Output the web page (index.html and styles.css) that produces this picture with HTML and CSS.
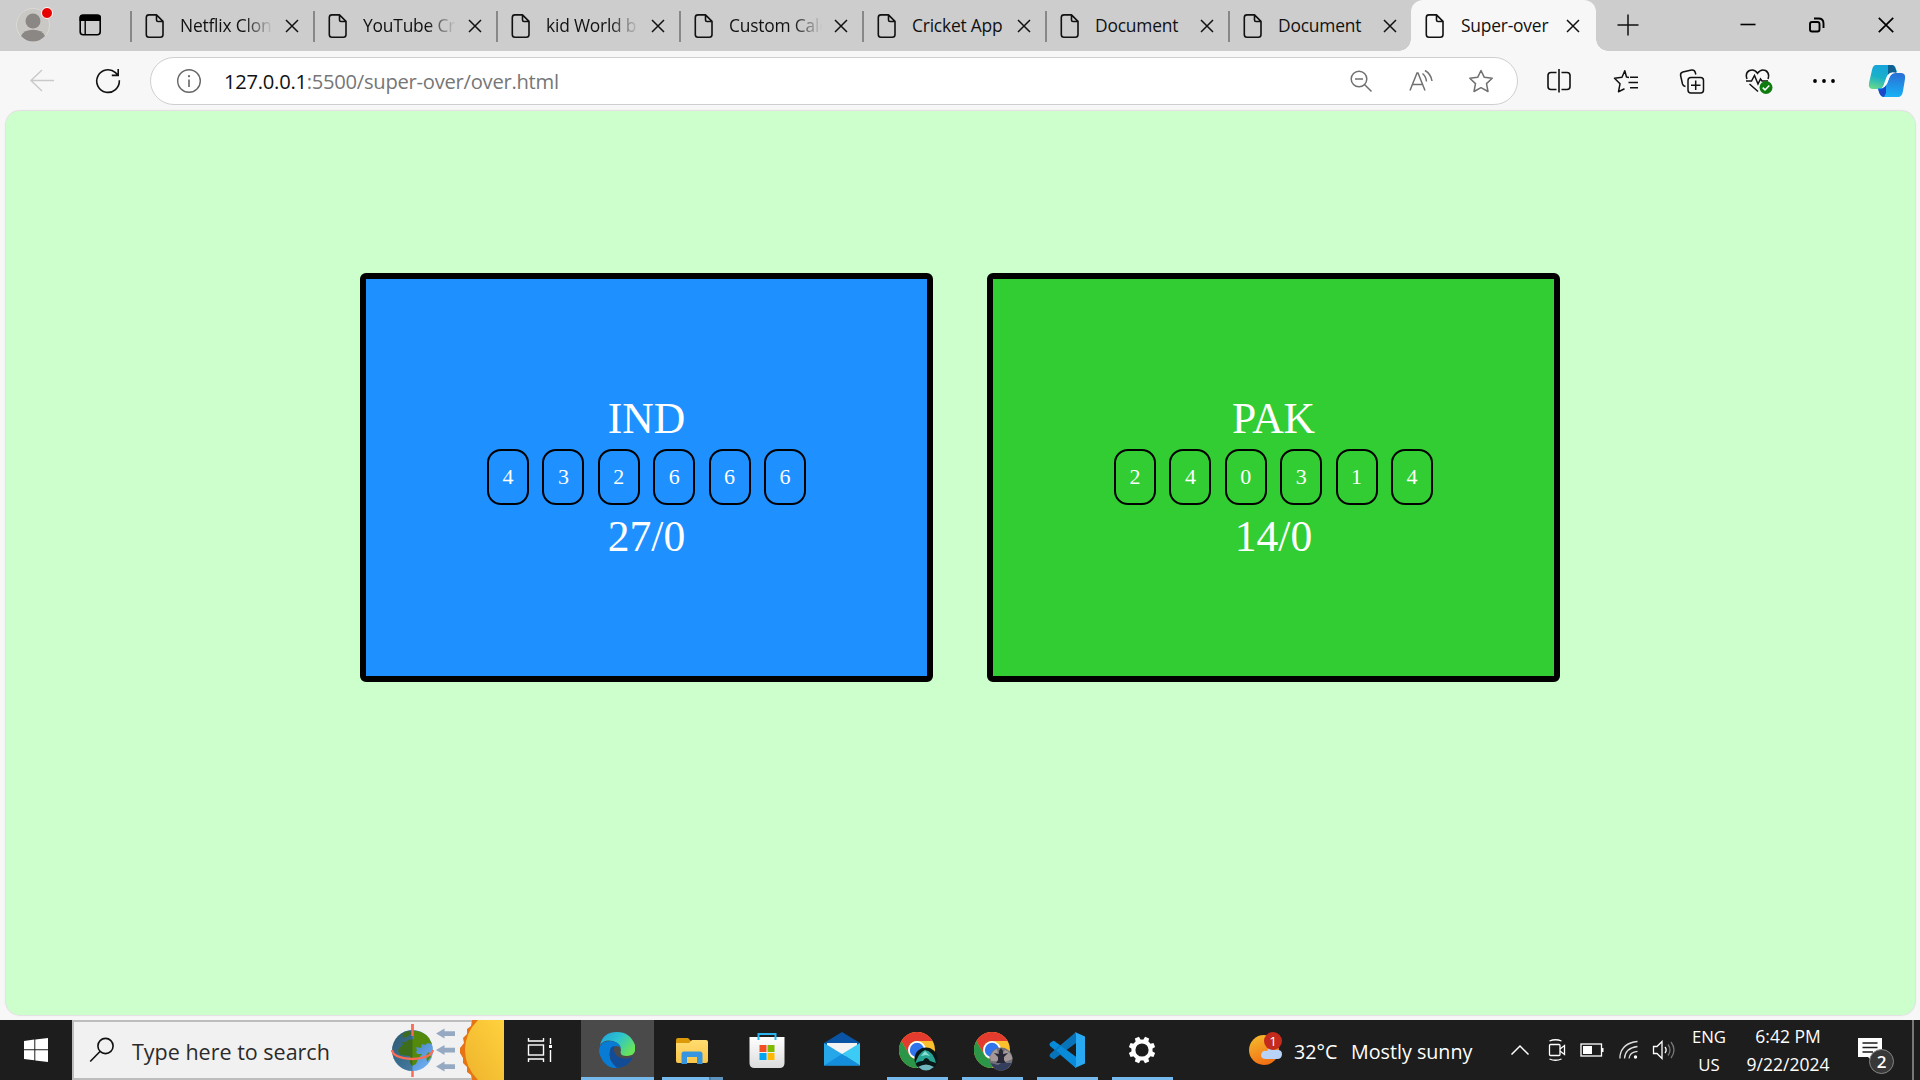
FILE: index.html
```html
<!DOCTYPE html>
<html lang="en">
<head>
<meta charset="utf-8">
<title>Super-over</title>
<link rel="stylesheet" href="styles.css">
</head>
<body>
<svg class="defs" width="0" height="0" aria-hidden="true">
  <defs>
    <symbol id="page" viewBox="0 0 20 26"><path d="M4 1.9H11.5L18 8.400V21.500Q18 24.200 15.300 24.200H4Q1.300 24.200 1.300 21.500V4.500Q1.300 1.900 4 1.900ZM11.500 2V7Q11.500 8.500 13 8.500H18" fill="none" stroke="#111" stroke-width="1.6" stroke-linejoin="round"/></symbol>
    <symbol id="close" viewBox="0 0 14 14"><path d="M1 1 13 13M13 1 1 13" fill="none" stroke="#111" stroke-width="1.5"/></symbol>
    <symbol id="chrome" viewBox="0 0 36 36">
      <circle cx="18" cy="18" r="18" fill="#fbc02d"/>
      <path d="M2.400 9A18 18 0 0 1 33.600 9H18A9 9 0 0 0 10.200 13.500L10.200 22.500Z" fill="#e33b2e"/>
      <path d="M2.400 9A18 18 0 0 0 18 36L25.800 22.500A9 9 0 0 1 10.200 22.500Z" fill="#2b9648"/>
      <circle cx="18" cy="18" r="9" fill="#fff"/><circle cx="18" cy="18" r="7.200" fill="#2f74ec"/>
    </symbol>
    <linearGradient id="edgeA" x1="0" y1="0" x2="1" y2=".6"><stop offset="0" stop-color="#1f9fdc"/><stop offset=".5" stop-color="#2dc3d0"/><stop offset="1" stop-color="#68e35a"/></linearGradient>
    <linearGradient id="copA" x1=".5" y1="0" x2=".2" y2="1"><stop offset="0" stop-color="#17a3dc"/><stop offset=".5" stop-color="#18b1c8"/><stop offset="1" stop-color="#68d88a"/></linearGradient>
    <linearGradient id="copB" x1=".6" y1="0" x2=".5" y2="1"><stop offset="0" stop-color="#2a6fd6"/><stop offset="1" stop-color="#17b2f5"/></linearGradient>
    <linearGradient id="sun" x1=".3" y1="0" x2=".7" y2="1"><stop offset="0" stop-color="#f5b72c"/><stop offset="1" stop-color="#f26a12"/></linearGradient>
    <linearGradient id="bigSun" x1="1" y1="0" x2="0" y2="1"><stop offset="0" stop-color="#ffd23e"/><stop offset="1" stop-color="#eeb32c"/></linearGradient>
    <linearGradient id="folder" x1="0" y1="0" x2="0" y2="1"><stop offset="0" stop-color="#ffdc70"/><stop offset="1" stop-color="#fbc64a"/></linearGradient>
    <linearGradient id="bag" x1="0" y1="0" x2="0" y2="1"><stop offset="0" stop-color="#fff"/><stop offset="1" stop-color="#dcdcdc"/></linearGradient>
    <linearGradient id="ocean" x1="0" y1="0" x2="1" y2="1"><stop offset="0" stop-color="#3d6b91"/><stop offset=".5" stop-color="#4f8cca"/><stop offset="1" stop-color="#78b8ff"/></linearGradient>
  </defs>
</svg>

<header class="tabstrip">
  <div class="profile">
    <svg width="40" height="40" viewBox="0 0 40 40"><circle cx="19" cy="20" r="16.500" fill="#cac8c4" stroke="#dcdad6"/><circle cx="19" cy="16" r="7.500" fill="#8b8785"/><path d="M7 31Q10 24.800 19 24.800T31 31Q26 36.500 19 36.500T7 31Z" fill="#8b8785"/><circle cx="33" cy="8" r="5.500" fill="#e60000" stroke="#fff"/></svg>
    <svg width="24" height="24" viewBox="0 0 24 24"><rect x="2.200" y="2.200" width="20" height="19.500" rx="3" fill="none" stroke="#000" stroke-width="1.600"/><path d="M1.500 8V4.500Q1.500 1.500 4.500 1.500H20Q23 1.500 23 4.500V8Z"/><path d="M7.200 8V21.500" stroke="#000" stroke-width="1.400"/></svg>
  </div>
  <div class="tab"><svg class="page"><use href="#page"/></svg><span class="label fade">Netflix Clon</span><svg class="x"><use href="#close"/></svg></div>
  <div class="tab"><svg class="page"><use href="#page"/></svg><span class="label fade">YouTube Cr</span><svg class="x"><use href="#close"/></svg></div>
  <div class="tab"><svg class="page"><use href="#page"/></svg><span class="label fade">kid World b</span><svg class="x"><use href="#close"/></svg></div>
  <div class="tab"><svg class="page"><use href="#page"/></svg><span class="label fade">Custom Cale</span><svg class="x"><use href="#close"/></svg></div>
  <div class="tab"><svg class="page"><use href="#page"/></svg><span class="label">Cricket App</span><svg class="x"><use href="#close"/></svg></div>
  <div class="tab"><svg class="page"><use href="#page"/></svg><span class="label">Document</span><svg class="x"><use href="#close"/></svg></div>
  <div class="tab"><svg class="page"><use href="#page"/></svg><span class="label">Document</span><svg class="x"><use href="#close"/></svg></div>
  <div class="tab active"><svg class="page"><use href="#page"/></svg><span class="label">Super-over</span><svg class="x"><use href="#close"/></svg></div>
  <svg class="newtab" width="22" height="22" viewBox="0 0 22 22"><path d="M11 .5V21.500M.5 11H21.500" stroke="#111" stroke-width="1.500"/></svg>
  <div class="window-buttons">
    <svg width="18" height="18" viewBox="0 0 18 18"><path d="M1.500 8.500H16.500" stroke="#000" stroke-width="1.600"/></svg>
    <svg width="18" height="18" viewBox="0 0 18 18" fill="none" stroke="#000" stroke-width="1.900"><rect x="2" y="6" width="9.500" height="9.500" rx="2"/><path d="M6 2.500H10.500Q15.500 2.500 15.500 7.500V12"/></svg>
    <svg width="18" height="18" viewBox="0 0 18 18"><path d="M1.800 1.800 16.200 16.200M16.200 1.800 1.800 16.200" stroke="#000" stroke-width="1.700"/></svg>
  </div>
</header>

<nav class="toolbar">
  <div class="nav-buttons">
    <svg width="26" height="26" viewBox="0 0 26 26"><path d="M13 2 2 12.500 13 23M2 12.500H25" fill="none" stroke="#c9c9c9" stroke-width="1.400"/></svg>
    <svg width="26" height="26" viewBox="0 0 26 26"><path d="M24.300 12.300A11.300 11.300 0 1 1 20.500 4.600L23 7.200M23.200 1V7.400H16.800" fill="none" stroke="#111" stroke-width="1.600"/></svg>
  </div>
  <div class="address">
    <svg width="26" height="26" viewBox="0 0 26 26"><circle cx="13" cy="13" r="11.300" fill="none" stroke="#666" stroke-width="1.400"/><path d="M13 11.500V19" stroke="#666" stroke-width="1.600"/><circle cx="13" cy="8.200" r="1.100" fill="#666"/></svg>
    <span class="url"><span class="host">127.0.0.1</span>:5500/super-over/over.html</span>
    <div class="address-actions">
      <svg width="26" height="26" viewBox="0 0 26 26" fill="none" stroke="#707070" stroke-width="1.500"><circle cx="11" cy="11" r="7.800"/><path d="M16.500 16.500 23.500 23.500M7 11H15"/></svg>
      <svg width="26" height="26" viewBox="0 0 26 26" fill="none" stroke="#707070" stroke-width="1.500"><path d="M2 22.500 9 5H10L17 22.500M4.500 16.500H14.500M14.500 5.500Q18 8.500 18.500 13.500M17 2.500Q23 6 24 13"/></svg>
      <svg width="26" height="26" viewBox="0 0 26 26" fill="none" stroke="#707070" stroke-width="1.500" stroke-linejoin="round"><path d="M13 2.500 16.300 9.300 24.200 10.300 18.500 15.600 20 23.500 13 19.700 6 23.500 7.500 15.600 1.800 10.300 9.700 9.300Z"/></svg>
    </div>
  </div>
  <div class="actions">
    <svg width="26" height="26" viewBox="0 0 26 26" fill="none" stroke="#111" stroke-width="1.600"><path d="M10.500 4.500H5Q2 4.500 2 7.500V18.500Q2 21.500 5 21.500H10.500M15.500 4.500H21Q24 4.500 24 7.500V18.500Q24 21.500 21 21.500H15.500M13 1V24.500"/></svg>
    <svg width="26" height="26" viewBox="0 0 26 26" fill="none" stroke="#111" stroke-width="1.500" stroke-linejoin="round"><path d="M16 9.500 13.500 9 11.800 2.800 9 9.300 1.500 10.200 7 15.800 5.500 23.700 11.500 20.800M17 9.200H25M15.500 14.500H25M17 19.700H25"/></svg>
    <svg width="26" height="26" viewBox="0 0 26 26" fill="none" stroke="#111" stroke-width="1.500"><path d="M6.500 18.500Q4 18 3.500 16L1.600 7.500Q1.200 4.800 3.800 4L12.500 2Q15.500 1.500 16.300 4.500L16.800 6.500"/><rect x="9" y="9.500" width="15.500" height="15.500" rx="3"/><path d="M16.700 12.500V22M12 17.300H21.500"/></svg>
    <svg class="health" width="30" height="28" viewBox="0 0 30 28" fill="none" stroke="#111" stroke-width="1.500"><path d="M3 12Q.8 6 5.500 3.500Q10.500 1.500 13.500 6.300Q17 1.500 21.500 3.500Q26 6 24 12M2 14H7.500L10.500 8.500 14 17 16.500 12 18 14H24M5.500 17 14 24.500"/><circle cx="22" cy="20.500" r="6.500" fill="#107c10" stroke="none"/><path d="m18.700 20.600 2.300 2.300 4.300-4.500" stroke="#fff"/></svg>
    <svg class="more" width="26" height="26" viewBox="0 0 26 26"><circle cx="4" cy="13" r="1.900"/><circle cx="13" cy="13" r="1.900"/><circle cx="22" cy="13" r="1.900"/></svg>
    <svg class="copilot" width="38" height="34" viewBox="0 0 38 34"><path d="M8 1H24Q27 1 28 5L29 8H25Q21 8 19.500 12L16 21Q14 25 10 25H5Q0 25 1 19L4 6Q5 1 8 1Z" fill="url(#copA)"/><path d="M20 1H24Q27 1 28.500 9Q22 7 20 11Z" fill="#10618f"/><path d="M30 33H16Q12 33 11 27L10 24H13Q17 24 19 19L22 12Q24 9 28 9H33Q38 9 37 15L35 27Q34 33 30 33Z" fill="url(#copB)"/><path d="M16 33Q12 33 10 25Q16 26 18 21V29Z" fill="#1949c9"/><path d="M19 12Q21 9 25 9Q22 11 20.500 16Q19 22 14 24Q16 22 17 17Z" fill="#fff"/></svg>
  </div>
</nav>

<main class="viewport">
  <section class="team ind">
    <div class="name">IND</div>
    <div class="balls"><span class="ball">4</span><span class="ball">3</span><span class="ball">2</span><span class="ball">6</span><span class="ball">6</span><span class="ball">6</span></div>
    <div class="score">27/0</div>
  </section>
  <section class="team pak">
    <div class="name">PAK</div>
    <div class="balls"><span class="ball">2</span><span class="ball">4</span><span class="ball">0</span><span class="ball">3</span><span class="ball">1</span><span class="ball">4</span></div>
    <div class="score">14/0</div>
  </section>
</main>

<footer class="taskbar">
  <div class="start"><svg width="24" height="24" viewBox="0 0 24 24"><path d="M0 3 10.300 1.600V11.300H0ZM11.300 1.500 24 0V11.300H11.300ZM0 12.300H10.300V22.200L0 21ZM11.300 12.300H24V24L11.300 22.400Z" fill="#fff"/></svg></div>
  <div class="search">
    <svg class="lens" width="26" height="26" viewBox="0 0 26 26"><circle cx="16.500" cy="9" r="7.600" fill="none" stroke="#111" stroke-width="1.600"/><path d="M11 14.500 1.200 24.500" stroke="#111" stroke-width="1.600"/></svg>
    <span class="placeholder">Type here to search</span>
    <svg class="equinox" width="116" height="60" viewBox="0 0 116 60">
      <path d="M24.500 4V10M24.500 50V57" stroke="#f96c55" stroke-width="2.500"/>
      <circle cx="24.500" cy="30.500" r="20.500" fill="url(#ocean)"/>
      <path d="M14.500 14Q18 11 22 11L23 14 19 17 15 18ZM25 10.500Q36 11 41 18L44 24 40 23 37 25 34 24 33 28 28 27 29 31 26 32 24 29 19 28 16 26 14 22 18 22 20 20 26 19Z" fill="#548a0c"/>
      <path d="M11 28 16 24 23 25 27 29 29 34 34 34 30 39 28 44 24 46 22 43V36L13 35Q9 32 11 28Z" fill="#548a0c"/>
      <path d="M38 35 41 32 43 37 39 42Z" fill="#548a0c"/>
      <path d="M24.500 10A20.500 20.500 0 0 0 24.500 51Z" fill="#173f35" opacity=".38"/>
      <path d="M4 30Q5 38 24.500 39Q43 38 45 30M24.500 4V16" fill="none" stroke="#f96c55" stroke-width="2.300"/>
      <g fill="#95a9c2"><path d="M48 13.500 56.500 8.500V11.300H67V16H56.500V18.500Z"/><path d="M48 30 56.500 25V27.700H67V32.500H56.500V35Z"/><path d="M48 46.500 56.500 41.500V44.200H67V49H56.500V51.500Z"/></g>
      <path d="M84 0 83 6 79 9 79 14 75 18 76 23 72 28V33L75 38V43L79 47V52L83 55 84 60H116V0Z" fill="#e67414"/>
      <path d="M90 0Q77 13 77 30T90 60H116V0Z" fill="url(#bigSun)"/>
    </svg>
  </div>
  <div class="slot taskview"><svg width="26" height="26" viewBox="0 0 26 26" fill="none" stroke="#fff" stroke-width="1.400"><path d="M1.500 1V4H16.500V1M1.500 25V22H16.500V25M23.500 1V7M23.500 13V25"/><rect x="1.500" y="8" width="15" height="10"/><path d="M22 9.500H25" stroke-width="3"/></svg></div>
  <div class="slot current"><svg width="36" height="36" viewBox="0 0 36 36"><path d="M1 13Q4 0 18 0Q31 0 36 13Q38 24 28 24Q20 24 22 18Q22 12 14 9Q5 7 1 13Z" fill="url(#edgeA)"/><path d="M0 20Q0 9 11 9Q20 9 22 16Q17 12 13 16Q8 23 13 30Q16 34 21 36Q5 38 0 20Z" fill="#087cd4"/><path d="M11 18Q12 14 16 14Q13 19 18 24Q25 29 34 25Q29 36 18 36Q9 29 11 18Z" fill="#124c97"/></svg></div>
  <div class="slot open stacked"><svg width="32" height="27" viewBox="0 0 32 27"><path d="M0 3Q0 1 2 1H12L15 4V10H0Z" fill="#dd9a08"/><path d="M0 6H13L16 3H30Q32 3 32 5V24Q32 26 30 26H2Q0 26 0 24Z" fill="url(#folder)"/><path d="M5.500 27V17Q5.500 14.500 8 14.500H24Q26.500 14.500 26.500 17V27H21V20H11V27Z" fill="#3695df"/></svg></div>
  <div class="slot"><svg width="36" height="36" viewBox="0 0 36 36"><path d="M.5 5H35.500V31Q35.500 36 30.500 36H5.500Q.5 36 .5 31Z" fill="url(#bag)"/><path d="M9.500 8V2H26.500V8" fill="none" stroke="#29b4ef" stroke-width="2"/><path d="M10.500 13H17.500V20H10.500Z" fill="#f25022"/><path d="M18.500 13H25.500V20H18.500Z" fill="#7fba00"/><path d="M10.500 21H17.500V28H10.500Z" fill="#00a4ef"/><path d="M18.500 21H25.500V28H18.500Z" fill="#ffb900"/></svg></div>
  <div class="slot mail"><svg width="36" height="34" viewBox="0 0 36 34"><path d="M0 11 18 0 36 11V22H0Z" fill="#0a54a5"/><path d="M3 11H33V24H3Z" fill="#f3f3f3"/><path d="M0 11 18 22 36 33.500H0Z" fill="#26a7ea"/><path d="M36 11V33.500L18 22Z" fill="#3bcbf4"/><path d="M0 33.500 18 22 36 33.500Z" fill="#158ddd"/></svg></div>
  <div class="slot open"><svg class="pinned" width="40" height="40" viewBox="-1 -1 40 40"><use href="#chrome" width="36" height="36"/><circle cx="27" cy="27" r="11.500" fill="#0a1717"/><path d="M16 32Q20 20 26 18Q34 19 37 31L31 29Q27 23 24 29Q19 29 16 32Z" fill="#28a493"/><path d="M22 24 26 19 31 24 27 23Z" fill="#86e1d4"/><path d="M19 35Q27 30 35 35Q27 42 19 35Z" fill="#70b7bd"/></svg></div>
  <div class="slot open"><svg class="pinned" width="40" height="40" viewBox="-1 -1 40 40"><use href="#chrome" width="36" height="36"/><circle cx="27" cy="27" r="11.500" fill="#707079"/><path d="M16 25Q19 18 23 17L25 27 31 18Q37 20 38.500 27L31 30 17 29Z" fill="#a59898"/><path d="M25 19 27 16 29 19 29 22 34 21 30 25 30 28 32 31H22L24 28 24 25 20 21 25 22Z" fill="#272735"/><path d="M16.500 31 24 33 27 31 37.500 31Q34 38.500 27 38.500T16.500 31Z" fill="#343f5d"/></svg></div>
  <div class="slot open"><svg width="36" height="36" viewBox="0 0 36 36"><path d="M1 11 4 9Q5 8.500 6 9.500L27 25V36L1 14Q0 12 1 11Z" fill="#078bd8"/><path d="M1 25 4 27Q5 27.500 6 26.500L27 11V0L1 22Q0 24 1 25Z" fill="#0873b8"/><path d="M12 14 27 25V36L7 18Z" fill="#0a8bda"/><path d="M26 0 36 4.500V31.500L26 36Q27 35 27 33V3Q27 1 26 0Z" fill="#28a9f1"/></svg></div>
  <div class="slot open"><svg width="28" height="28" viewBox="-14 -14 28 28"><circle r="8.600" fill="none" stroke="#fff" stroke-width="4"/><g fill="#fff"><path id="tooth" d="M-2.800-9-2.200-13.300H2.200L2.800-9Z" transform="rotate(22.500)"/><use href="#tooth" transform="rotate(45)"/><use href="#tooth" transform="rotate(90)"/><use href="#tooth" transform="rotate(135)"/><use href="#tooth" transform="rotate(180)"/><use href="#tooth" transform="rotate(225)"/><use href="#tooth" transform="rotate(270)"/><use href="#tooth" transform="rotate(315)"/></g></svg></div>
  <div class="weather">
    <div class="weather-icon"><svg width="34" height="34" viewBox="0 0 34 34"><circle cx="15" cy="18" r="15" fill="url(#sun)"/><path d="M17 27Q12 27 12 23Q13 18 18 19Q20 14 25 18Q33 17 33 22T28 27Z" fill="#b9d3f7"/><circle cx="24" cy="9" r="9" fill="#c42b1c"/></svg><span class="count">1</span></div>
    <span class="temp">32°C</span><span class="sky">Mostly sunny</span>
  </div>
  <div class="tray">
    <svg width="20" height="12" viewBox="0 0 20 12"><path d="M1.500 10.500 10 2 18.500 10.500" fill="none" stroke="#fff" stroke-width="1.500"/></svg>
    <svg class="cam" width="18" height="24" viewBox="0 0 18 24" fill="none" stroke="#fff" stroke-width="1.300"><rect x="1.500" y="6.500" width="10.500" height="11" rx="1"/><path d="M12 11 16.500 7.500V16.500L12 13M1.500 3Q7.500 .5 13.500 3M1.500 21Q7.500 23.500 13.500 21"/></svg>
    <svg class="battery" width="24" height="14" viewBox="0 0 24 14"><rect x="1" y="1" width="20.500" height="12" fill="none" stroke="#fff" stroke-width="1.300"/><path d="M3 3H12V11H3ZM22 5H23.500V9H22Z" fill="#fff"/></svg>
    <svg class="wifi" width="20" height="20" viewBox="0 0 20 20" fill="none" stroke="#ddd" stroke-width="1.300"><path d="M1 18.500V16Q3 3 18.500 1.500M5.500 18.500Q6 8 18.500 6.500M10 18.500Q10.500 12 18.500 11.300"/><circle cx="16.500" cy="17" r="1.700" fill="#fff" stroke="none"/></svg>
    <svg class="volume" width="24" height="20" viewBox="0 0 24 20" fill="none" stroke="#fff" stroke-width="1.300"><path d="M1.500 6.500H5L10 1.500V18.500L5 13.500H1.500ZM13 7Q15.300 10 13 13"/><path d="M16 4.500Q20 10 16 15.500M19 2Q25 10 19 18" stroke="#777"/></svg>
  </div>
  <div class="lang"><span>ENG</span><span>US</span></div>
  <div class="clock"><span>6:42 PM</span><span>9/22/2024</span></div>
  <div class="notice"><svg width="38" height="38" viewBox="0 0 38 38"><path d="M1 1H25V20H16V25L11 20H1Z" fill="#fff"/><path d="M5.500 6H20.500M5.500 10.500H20.500M5.500 15H16" stroke="#1d1d1d" stroke-width="1.300"/><circle cx="24.500" cy="24.500" r="12" fill="#383838" stroke="#858585"/></svg><span class="badge">2</span></div>
  <div class="peek"></div>
</footer>
</body>
</html>
```
FILE: styles.css
```css
* { box-sizing: border-box; }
body {
  margin: 0;
  width: 1920px;
  height: 1080px;
  overflow: hidden;
  display: flex;
  flex-direction: column;
  background: #f7f7f7;
  font-family: "Open Sans", "Noto Sans", sans-serif;
}
svg { display: block; flex: none; }
.defs { position: absolute; }

/* tab strip */
.tabstrip { display: flex; height: 51px; background: #cdcdcd; flex: none; }
.profile { width: 130px; padding-left: 14px; padding-top: 5px; display: flex; gap: 24px; flex: none; }
.profile svg + svg { margin-top: 8px; }
.tab {
  width: 183px;
  flex: none;
  display: flex;
  align-items: center;
  padding-left: 13px;
  position: relative;
  font-size: 17.4px;
  letter-spacing: -0.2px;
  color: #111;
}
.tab:not(.active) {
  border-left: 2px solid transparent;
  border-image: linear-gradient(transparent 12px, #888 12px, #888 41px, transparent 41px) 1;
  border-width: 0 0 0 2px;
}
.page { width: 20px; height: 26px; margin-right: 15px; }
.label { width: 102px; height: 26px; line-height: 25px; margin-right: 3px; white-space: nowrap; flex: none; }
.fade { -webkit-mask-image: linear-gradient(90deg, #000 64px, transparent 93px); mask-image: linear-gradient(90deg, #000 64px, transparent 93px); }
.x { width: 14px; height: 14px; }
.active { width: 185px; padding-left: 14px; background: #f7f7f7; border-radius: 12px 12px 0 0; }
.active .page { margin-right: 16px; }
.active::before, .active::after {
  content: "";
  position: absolute;
  bottom: 0;
  width: 12px;
  height: 12px;
}
.active::before { left: -12px; background: radial-gradient(circle at 0 0, transparent 11.5px, #f7f7f7 12px); }
.active::after { right: -12px; background: radial-gradient(circle at 100% 0, transparent 11.5px, #f7f7f7 12px); }
.newtab { margin: 14px 0 0 21px; }
.window-buttons { display: flex; gap: 51px; margin: 16px 25.5px 0 auto; }

/* toolbar */
.toolbar { display: flex; height: 60px; flex: none; }
.nav-buttons { width: 150px; padding: 17px 0 0 29px; display: flex; gap: 40px; flex: none; }
.address {
  width: 1368px;
  height: 48px;
  margin-top: 6px;
  padding-left: 25px;
  display: flex;
  align-items: center;
  background: #fff;
  border: 1px solid #cfcfcf;
  border-radius: 24px;
  flex: none;
}
.url { margin-left: 22px; font-size: 20.2px; letter-spacing: -0.27px; color: #767676; white-space: nowrap; }
.host { color: #111; }
.address-actions { margin-left: auto; padding-right: 23.5px; display: flex; gap: 34px; }
.actions { display: grid; grid-template-columns: repeat(6, 66.4px); justify-items: center; align-items: center; margin-left: 8px; height: 60px; }
.health { margin-left: 2px; }
.more { margin-right: 2px; }
.copilot { margin-right: 9px; }

/* page */
.viewport {
  width: 1909px;
  height: 904px;
  margin-left: 5.5px;
  padding-top: 162px;
  display: flex;
  justify-content: center;
  align-items: flex-start;
  gap: 54px;
  background: #cfc;
  border-radius: 14px;
  box-shadow: 0 0 1px 1px #e2dfe2;
  flex: none;
  font-family: "Liberation Serif", serif;
  color: #fff;
}
.team {
  width: 573px;
  height: 409px;
  border: 6px solid #000;
  border-radius: 6px;
  display: flex;
  flex-direction: column;
  align-items: center;
  justify-content: center;
}
.ind { background: #1e90ff; }
.pak { background: #32cd32; }
.name, .score { font-size: 43.6px; line-height: 50px; }
.name { margin-top: -1px; }
.balls { display: flex; gap: 13.4px; margin: 6px 0; }
.ball {
  width: 42px;
  height: 56px;
  border: 2px solid #000;
  border-radius: 14px;
  font-size: 22px;
  display: grid;
  place-items: center;
}

/* taskbar */
.taskbar { margin-top: auto; display: flex; height: 60px; background: #1d1d1d; color: #fff; flex: none; }
.start { width: 72px; display: grid; place-items: center; flex: none; }
.search {
  width: 432px;
  height: 60px;
  display: flex;
  align-items: center;
  background: linear-gradient(#bdbdbd 2px, #f1f1f1 2px, #f1f1f1 58px, #bdbdbd 58px);
  border-left: 2px solid #bdbdbd;
  padding-left: 15px;
  flex: none;
}
.placeholder { margin-left: 17px; font-size: 21.5px; color: #2b2b2b; white-space: nowrap; line-height: 30px; padding-top: 4px; }
.equinox { margin-left: auto; }
.slot { width: 75px; display: grid; place-items: center; flex: none; }
.taskview { padding-right: 4px; }
.current { background: linear-gradient(#4a4a4a 57px, #76b9ed 57px) 2px 0 / 73px 60px no-repeat; }
.open { background: linear-gradient(#76b9ed, #76b9ed) 8px 57px / 61px 3px no-repeat; }
.stacked { background: linear-gradient(90deg, #76b9ed 47px, #4c7da3 47px, #4c7da3 49px, #5e93bd 49px) 8px 57px / 61px 3px no-repeat; }
.mail { padding-bottom: 2px; }
.pinned { margin: 1px 0 0 2px; }
.weather { margin-left: 70px; width: 259px; display: flex; align-items: center; font-size: 19.7px; white-space: nowrap; flex: none; }
.weather-icon { position: relative; top: -1px; }
.count { position: absolute; left: 15px; top: 0; width: 18px; text-align: center; font-size: 13.5px; line-height: 18px; }
.temp { margin-left: 11px; width: 57px; padding-top: 3px; }
.sky { padding-top: 3px; }
.tray { width: 168px; display: flex; align-items: center; margin-left: 2px; flex: none; }
.cam { margin-left: 18px; }
.battery { margin-left: 14px; }
.wifi { margin-left: 15px; }
.volume { margin-left: 13px; }
.lang, .clock { display: flex; flex-direction: column; align-items: center; font-size: 16.8px; line-height: 28px; padding-top: 3px; flex: none; white-space: nowrap; }
.lang { width: 64px; margin-left: -1px; }
.clock { width: 94px; font-size: 17.5px; padding-top: 2px; }
.notice { position: relative; margin: 17px 0 0 22px; }
.badge { position: absolute; left: 12px; top: 12px; width: 25px; line-height: 25px; text-align: center; font-size: 17px; font-weight: 600; }
.peek { margin-left: auto; margin-right: 6px; width: 2px; background: #777; }
```
